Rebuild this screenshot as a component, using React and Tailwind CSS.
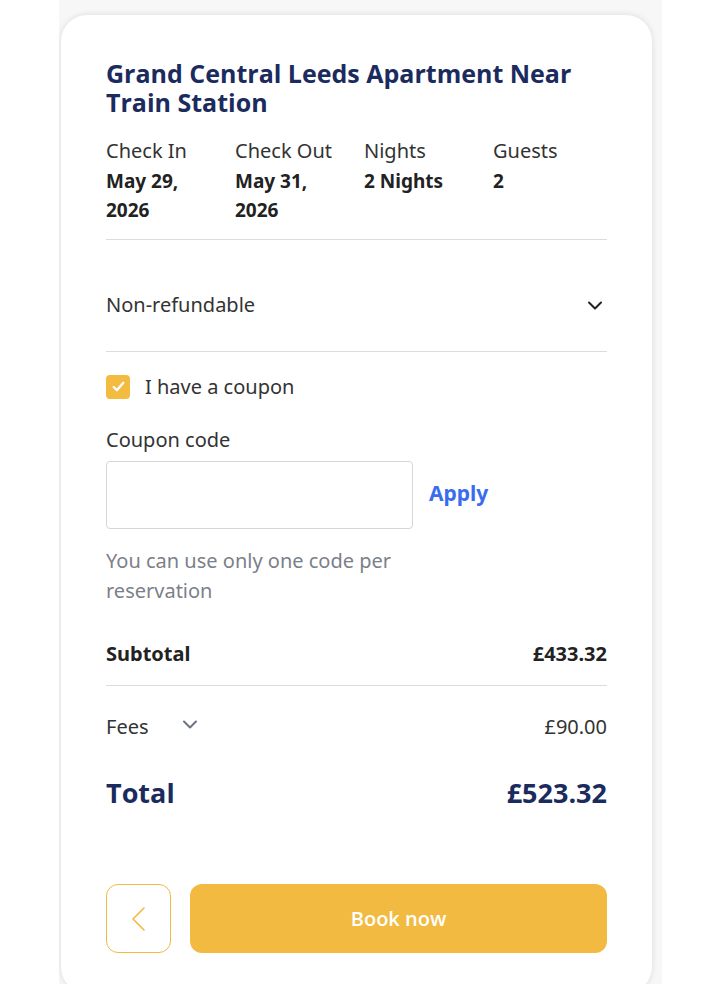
import { useState } from "react";

const TITLE = "Grand Central Leeds Apartment Near Train Station";

const details = [
  { label: "Check In", value: "May 29, 2026" },
  { label: "Check Out", value: "May 31, 2026" },
  { label: "Nights", value: "2 Nights" },
  { label: "Guests", value: "2" },
];

function Chevron({ className }) {
  return (
    <svg viewBox="0 0 16 16" className={className} fill="none" stroke="currentColor" strokeWidth="2" strokeLinecap="round" strokeLinejoin="round">
      <path d="M2 5.5l6 6 6-6" />
    </svg>
  );
}

export default function App() {
  const [coupon, setCoupon] = useState(true);
  const [code, setCode] = useState("");

  return (
    <div className="min-h-[984px] bg-white" style={{ fontFamily: '"Noto Sans", "Open Sans", sans-serif' }}>
      <div className="ml-[59px] w-[603px] bg-[#f7f7f7] pt-[15px] h-[984px] overflow-hidden">
        {/* booking card */}
        <div className="ml-[2px] w-[591px] bg-white rounded-[26px] shadow-[0_0_6px_rgba(0,0,0,0.12)] pt-[44px] px-[45px] pb-[40px]">
          <h1 className="text-[25px] leading-[29px] font-bold text-[#1b2b5e]" style={{ fontFamily: '"Open Sans", "Noto Sans", sans-serif' }}>
            {TITLE}
          </h1>

          <div className="flex mt-[19px] pb-[14px] border-b border-[#dcdcdc]">
            {details.map((d) => (
              <div key={d.label} className="w-[129px] shrink-0 pr-[16px]">
                <div className="text-[20px] leading-[29px] text-[#333]">{d.label}</div>
                <div className="mt-[2px] text-[19px] leading-[29px] font-bold text-[#222]">{d.value}</div>
              </div>
            ))}
          </div>

          {/* cancellation policy */}
          <button className="w-full flex items-center justify-between pt-[50px] pb-[32px] border-b border-[#dcdcdc] text-[20px] text-[#333]">
            <span className="leading-[29px]">Non-refundable</span>
            <Chevron className="w-[16px] h-[16px] mr-[4px] text-[#222]" />
          </button>

          {/* coupon */}
          <label className="flex items-center gap-[15px] mt-[20px] cursor-pointer">
            <span
              onClick={() => setCoupon(!coupon)}
              className={`w-[24px] h-[24px] rounded-[4px] flex items-center justify-center ${coupon ? "bg-[#f3bb3f]" : "border border-gray-300"}`}
            >
              {coupon && (
                <svg viewBox="0 0 16 16" className="w-[17px] h-[17px]" fill="none" stroke="white" strokeWidth="2.2" strokeLinecap="round" strokeLinejoin="round">
                  <path d="M3.5 8.5l3 3 6-7" />
                </svg>
              )}
            </span>
            <span className="text-[20px] leading-[29px] text-[#333]">I have a coupon</span>
          </label>

          {coupon && (
            <div className="mt-[24px]">
              <div className="text-[20px] leading-[29px] text-[#333]">Coupon code</div>
              <div className="flex items-center mt-[7px]">
                <input
                  value={code}
                  onChange={(e) => setCode(e.target.value)}
                  className="w-[307px] h-[68px] border border-[#d6d6d6] rounded-[4px] px-4 outline-none text-[18px]"
                />
                <button className="ml-[16px] -mt-[3px] text-[21px] font-bold text-[#3a6cf0]">Apply</button>
              </div>
              <p className="mt-[17px] text-[20px] leading-[30px] text-[#7b7f89] w-[340px]">
                You can use only one code per reservation
              </p>
            </div>
          )}

          {/* price summary */}
          <div className="flex justify-between items-center mt-[33px] pb-[17px] border-b border-[#dcdcdc] text-[20px] font-bold text-[#222]">
            <span className="leading-[29px]">Subtotal</span>
            <span className="leading-[29px]">£433.32</span>
          </div>
          <div className="flex justify-between items-center mt-[26px] text-[20px] text-[#333]">
            <div className="flex items-center">
              <span className="leading-[29px]">Fees</span>
              <Chevron className="w-[16px] h-[16px] ml-[33px] -mt-[6px] text-[#6b7280]" />
            </div>
            <span className="leading-[29px]">£90.00</span>
          </div>
          <div className="flex justify-between items-center mt-[36px] text-[27px] font-bold text-[#1b2b5e]" style={{ fontFamily: '"Open Sans", "Noto Sans", sans-serif' }}>
            <span className="leading-[32px]">Total</span>
            <span className="leading-[32px]">£523.32</span>
          </div>

          {/* actions */}
          <div className="flex gap-[19px] mt-[75px]">
            <button className="w-[65px] h-[69px] border border-[#f2ba41] rounded-[12px] flex items-center justify-center text-[#f2ba41]">
              <svg viewBox="0 0 13 24" className="w-[13px] h-[24px]" fill="none" stroke="currentColor" strokeWidth="1.6" strokeLinecap="round" strokeLinejoin="round">
                <path d="M12 1L1 12l11 11" />
              </svg>
            </button>
            <button className="flex-1 h-[69px] bg-[#f2ba41] rounded-[12px] text-white text-[20px] font-semibold" style={{ fontFamily: '"Open Sans", "Noto Sans", sans-serif' }}>
              Book now
            </button>
          </div>
        </div>
      </div>
    </div>
  );
}
